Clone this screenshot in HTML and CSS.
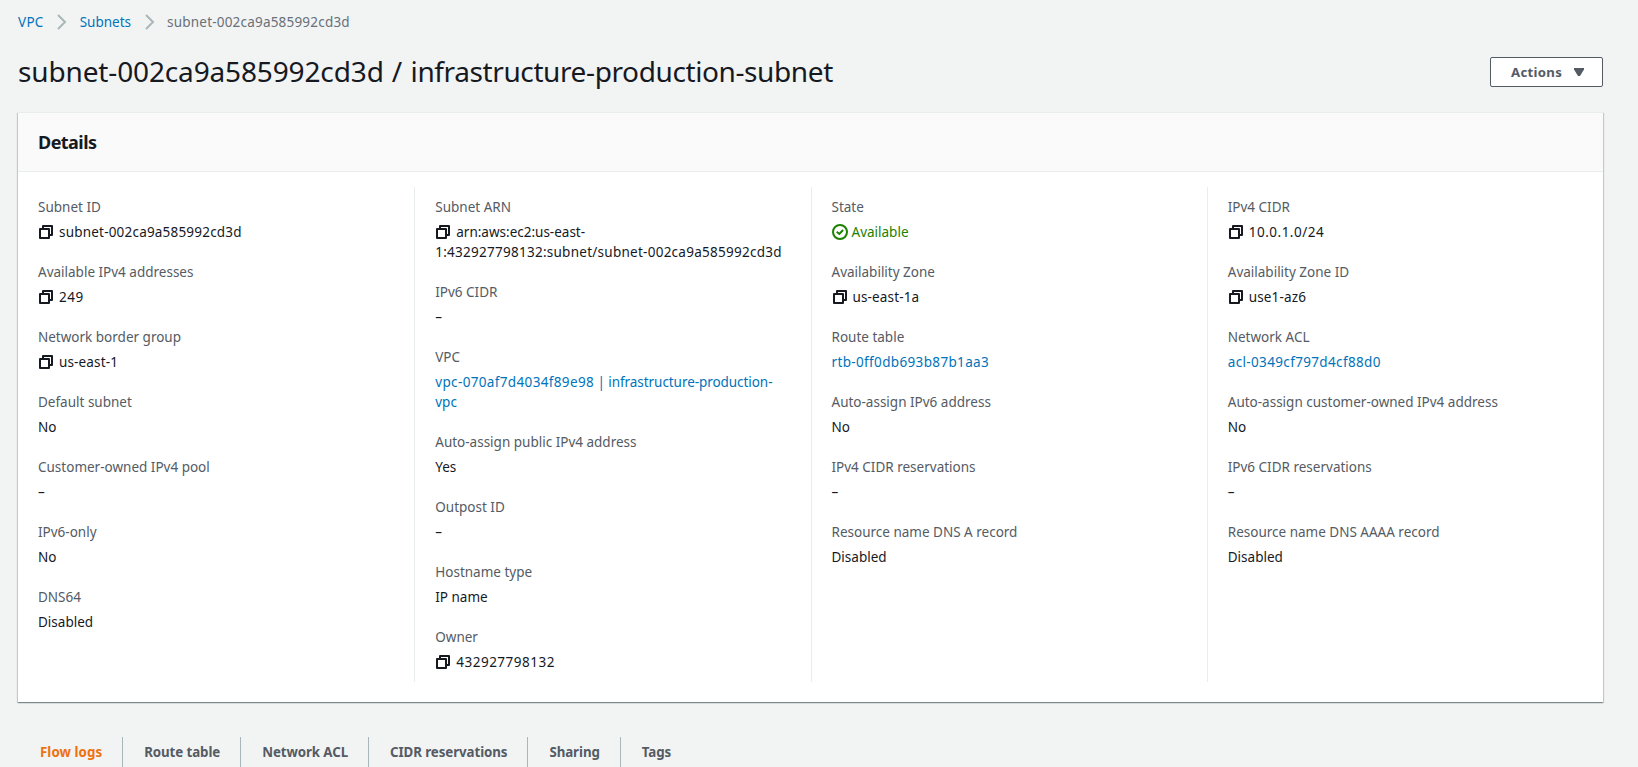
FILE: index.html
```html
<!DOCTYPE html>
<html lang="en">
<head>
<meta charset="utf-8">
<title>Subnet details</title>
<link rel="stylesheet" href="styles.css">
</head>
<body>
<svg class="sprite" aria-hidden="true">
  <symbol id="copy" viewBox="0 0 16 16"><path d="M2 5h9v9H2zM5 5V2h9v9h-3" fill="none" stroke="currentColor" stroke-width="2" stroke-linejoin="round"/></symbol>
  <symbol id="ok" viewBox="0 0 16 16"><circle cx="8" cy="8" r="7" fill="none" stroke="currentColor" stroke-width="2"/><path d="M4.7 7.8 7.3 10l3.8-4" fill="none" stroke="currentColor" stroke-width="2"/></symbol>
  <symbol id="chevron" viewBox="0 0 10 16"><path d="M1 1l7 7-7 7" fill="none" stroke="currentColor" stroke-width="2"/></symbol>
</svg>
<nav class="crumbs">
  <a class="link crumb" href="#">VPC</a>
  <svg class="chevron"><use href="#chevron"/></svg>
  <a class="link crumb" href="#">Subnets</a>
  <svg class="chevron"><use href="#chevron"/></svg>
  <span class="crumb current id">subnet-002ca9a585992cd3d</span>
</nav>
<header class="page-head">
  <h1 class="title">subnet-002ca9a585992cd3d <span class="slash">/</span> <span class="name">infrastructure-production-subnet</span></h1>
  <button class="actions">Actions<svg class="caret" viewBox="0 0 10 8"><path d="M0 0h10v1.5L6 8H4L0 1.5z" fill="currentColor"/></svg></button>
</header>
<section class="card">
  <h2 class="card-head">Details</h2>
  <div class="columns">
    <dl class="column">
      <div class="field"><dt>Subnet ID</dt><dd class="id"><svg class="copy"><use href="#copy"/></svg>subnet-002ca9a585992cd3d</dd></div>
      <div class="field"><dt>Available IPv4 addresses</dt><dd class="num"><svg class="copy"><use href="#copy"/></svg>249</dd></div>
      <div class="field"><dt>Network border group</dt><dd class="zone"><svg class="copy"><use href="#copy"/></svg>us-east-1</dd></div>
      <div class="field"><dt>Default subnet</dt><dd>No</dd></div>
      <div class="field"><dt>Customer-owned IPv4 pool</dt><dd>–</dd></div>
      <div class="field"><dt>IPv6-only</dt><dd>No</dd></div>
      <div class="field"><dt>DNS64</dt><dd>Disabled</dd></div>
    </dl>
    <dl class="column">
      <div class="field"><dt>Subnet ARN</dt><dd><svg class="copy"><use href="#copy"/></svg>arn:aws:ec2:us-east-<br><span class="id arn">1:432927798132:subnet/subnet-002ca9a585992cd3d</span></dd></div>
      <div class="field"><dt>IPv6 CIDR</dt><dd>–</dd></div>
      <div class="field"><dt>VPC</dt><dd><a class="link" href="#"><span class="hex">vpc-070af7d4034f89e98</span><span class="vpc-name"> | infrastructure-production-</span><br>vpc</a></dd></div>
      <div class="field"><dt>Auto-assign public IPv4 address</dt><dd>Yes</dd></div>
      <div class="field"><dt>Outpost ID</dt><dd>–</dd></div>
      <div class="field"><dt>Hostname type</dt><dd>IP name</dd></div>
      <div class="field"><dt>Owner</dt><dd class="num"><svg class="copy"><use href="#copy"/></svg>432927798132</dd></div>
    </dl>
    <dl class="column">
      <div class="field"><dt>State</dt><dd class="available"><svg class="ok"><use href="#ok"/></svg>Available</dd></div>
      <div class="field"><dt>Availability Zone</dt><dd class="zone"><svg class="copy"><use href="#copy"/></svg>us-east-1a</dd></div>
      <div class="field"><dt>Route table</dt><dd class="hex"><a class="link" href="#">rtb-0ff0db693b87b1aa3</a></dd></div>
      <div class="field"><dt>Auto-assign IPv6 address</dt><dd>No</dd></div>
      <div class="field"><dt>IPv4 CIDR reservations</dt><dd>–</dd></div>
      <div class="field"><dt>Resource name DNS A record</dt><dd>Disabled</dd></div>
    </dl>
    <dl class="column">
      <div class="field"><dt>IPv4 CIDR</dt><dd class="num"><svg class="copy"><use href="#copy"/></svg>10.0.1.0/24</dd></div>
      <div class="field"><dt>Availability Zone ID</dt><dd class="zone"><svg class="copy"><use href="#copy"/></svg>use1-az6</dd></div>
      <div class="field"><dt>Network ACL</dt><dd class="hex"><a class="link" href="#">acl-0349cf797d4cf88d0</a></dd></div>
      <div class="field"><dt>Auto-assign customer-owned IPv4 address</dt><dd>No</dd></div>
      <div class="field"><dt>IPv6 CIDR reservations</dt><dd>–</dd></div>
      <div class="field"><dt>Resource name DNS AAAA record</dt><dd>Disabled</dd></div>
    </dl>
  </div>
</section>
<nav class="tabs">
  <a class="tab active" href="#">Flow logs</a>
  <a class="tab" href="#">Route table</a>
  <a class="tab" href="#">Network ACL</a>
  <a class="tab" href="#">CIDR reservations</a>
  <a class="tab" href="#">Sharing</a>
  <a class="tab" href="#">Tags</a>
</nav>
</body>
</html>
```
FILE: styles.css
```css
* { box-sizing: border-box; }
html { overflow: hidden; }
body {
  margin: 0;
  padding: 12px 35px 0 18px;
  height: 767px;
  overflow: hidden;
  background: #f2f3f3;
  color: #16191f;
  font: 13.5px/20px "Noto Sans", sans-serif;
}
a { text-decoration: none; }
.link { color: #0073bb; }
.sprite { display: none; }
.id { letter-spacing: 0.2px; }
.arn { letter-spacing: 0.26px; }
.hex { letter-spacing: 0.35px; }
.num { letter-spacing: 0.5px; }
.zone { letter-spacing: 0.15px; }
.vpc-name { letter-spacing: -0.06px; }

.crumbs { display: flex; align-items: center; height: 20px; }
.crumb:first-child { letter-spacing: 0.3px; }
.chevron { width: 10px; height: 16px; margin: 0 12.5px 0 13.5px; color: #aab7b8; }
.current { color: #687078; }

.page-head {
  display: flex;
  justify-content: space-between;
  align-items: center;
  height: 36px;
  margin: 22px 0;
}
.title {
  margin: 0;
  padding-bottom: 2px;
  font-size: 28px;
  line-height: 34px;
  font-weight: 400;
  letter-spacing: -0.14px;
}
.slash { margin: 0 1.3px 0 1px; }
.name { letter-spacing: -0.39px; }
.actions {
  display: flex;
  align-items: center;
  justify-content: space-between;
  width: 113px;
  height: 30px;
  margin: 0;
  padding: 0 18px 0 20px;
  border: 1px solid #545b64;
  border-radius: 2px;
  background: #fff;
  color: #545b64;
  font: 700 13.2px/20px "Noto Sans", sans-serif;
  letter-spacing: 0.3px;
}
.caret { width: 10px; height: 8px; }

.card {
  height: 590px;
  border-top: 1px solid #eaeded;
  background: #fff;
  box-shadow: 0 1px 1px 0 rgba(0,28,36,.3), 1px 1px 1px 0 rgba(0,28,36,.15), -1px 1px 1px 0 rgba(0,28,36,.15);
}
.card-head {
  margin: 0;
  height: 59px;
  padding: 18px 20px;
  border-bottom: 1px solid #eaeded;
  background: #fafafa;
  font-size: 18px;
  line-height: 22px;
  font-weight: 700;
  letter-spacing: -0.55px;
}
.columns { display: grid; grid-template-columns: repeat(4, 1fr); padding: 15px 0 20px; }
.column {
  display: flex;
  flex-direction: column;
  gap: 20px;
  margin: 0;
  padding: 10px 0 10px 20px;
}
.column + .column { border-left: 1px solid #eaeded; }
dt { color: #545b64; }
dd { margin: 5px 0 0; white-space: nowrap; }
.copy { width: 16px; height: 16px; margin: 2px 5px 0 0; vertical-align: top; }
.ok { width: 16px; height: 16px; margin: 2px 4px 0 0; vertical-align: top; }
.available { color: #1d8102; }

.tabs { display: flex; margin-top: 35px; height: 30px; }
.tab {
  padding: 5px 20px 5px 21px;
  border-left: 1px solid #aab7b8;
  color: #545b64;
  font-weight: 700;
  font-size: 13.3px;
  letter-spacing: -0.08px;
}
.tab:first-child { border-left-color: transparent; letter-spacing: 0.07px; }
.active { color: #ec7211; }
```
